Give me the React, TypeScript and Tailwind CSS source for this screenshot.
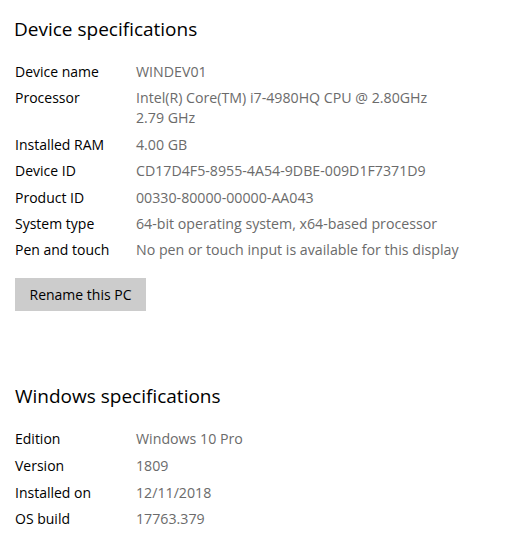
import React from 'react';

const deviceSpecs: { label: string; value: string[] }[] = [
  { label: 'Device name', value: ['WINDEV01'] },
  { label: 'Processor', value: ['Intel(R) Core(TM) i7-4980HQ CPU @ 2.80GHz', '2.79 GHz'] },
  { label: 'Installed RAM', value: ['4.00 GB'] },
  { label: 'Device ID', value: ['CD17D4F5-8955-4A54-9DBE-009D1F7371D9'] },
  { label: 'Product ID', value: ['00330-80000-00000-AA043'] },
  { label: 'System type', value: ['64-bit operating system, x64-based processor'] },
  { label: 'Pen and touch', value: ['No pen or touch input is available for this display'] },
];

const windowsSpecs: { label: string; value: string[] }[] = [
  { label: 'Edition', value: ['Windows 10 Pro'] },
  { label: 'Version', value: ['1809'] },
  { label: 'Installed on', value: ['12/11/2018'] },
  { label: 'OS build', value: ['17763.379'] },
];

const SpecRows = ({ rows, gap }: { rows: { label: string; value: string[] }[]; gap: string }) => (
  <div className={`flex flex-col ${gap}`}>
    {rows.map((row) => (
      <div key={row.label} className="flex text-[14px] leading-5">
        <div className="w-[121px] shrink-0 text-black">{row.label}</div>
        <div className="text-[#6b6b6b] text-[14.2px]">
          {row.value.map((line) => (
            <div key={line}>{line}</div>
          ))}
        </div>
      </div>
    ))}
  </div>
);

export default function App() {
  return (
    <div
      className="w-[516px] h-[536px] overflow-hidden bg-white pl-[15px] pt-[17px]"
      style={{ fontFamily: '"Open Sans", "Noto Sans", sans-serif' }}
    >
      {/* Device specifications */}
      <h2 className="text-[19px] leading-6 text-black -ml-px font-normal">Device specifications</h2>
      <div className="mt-[21px]">
        <SpecRows rows={deviceSpecs} gap="gap-[6.4px]" />
      </div>
      <button className="mt-[18px] h-[33px] w-[131px] bg-[#cccccc] text-[14px] text-black">
        Rename this PC
      </button>

      {/* Windows specifications */}
      <h2 className="mt-[73px] text-[19px] leading-6 text-black font-normal">Windows specifications</h2>
      <div className="mt-[21px]">
        <SpecRows rows={windowsSpecs} gap="gap-[6.7px]" />
      </div>
    </div>
  );
}
